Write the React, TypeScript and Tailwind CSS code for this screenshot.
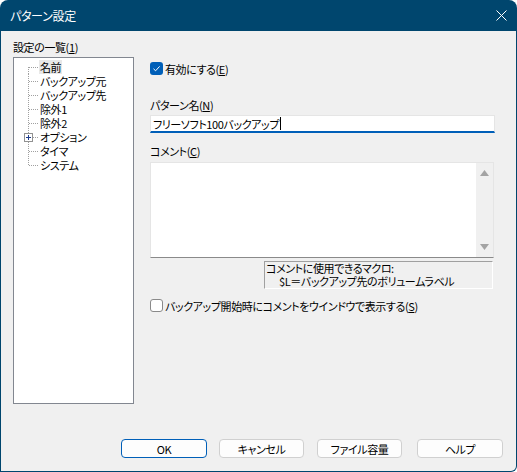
const items = ['名前', 'バックアップ元', 'バックアップ先', '除外1', '除外2', 'オプション', 'タイマ', 'システム'];

function TreeLines({ first, last, plus }: { first: boolean; last: boolean; plus: boolean }) {
  return (
    <svg width="24" height="14" className="shrink-0" shapeRendering="crispEdges">
      <line x1="14.5" y1={first ? 7 : 0} x2="14.5" y2={last ? 8 : 14} stroke="#a0a0a0" strokeDasharray="1 1" />
      <line x1="15" y1="7.5" x2="24" y2="7.5" stroke="#a0a0a0" strokeDasharray="1 1" />
      {plus && (
        <g>
          <rect x="10.5" y="3.5" width="8" height="8" fill="#fff" stroke="#919191" />
          <line x1="12" y1="7.5" x2="17" y2="7.5" stroke="#1e3c8c" />
          <line x1="14.5" y1="5" x2="14.5" y2="10" stroke="#1e3c8c" />
        </g>
      )}
    </svg>
  );
}

function Button({ label, primary, className }: { label: string; primary?: boolean; className?: string }) {
  return (
    <div
      className={`flex h-[19px] items-center justify-center rounded-[4px] border bg-[#fdfdfd] text-black ${
        primary ? 'border-[#005fb8]' : 'border-[#d0d0d0]'
      } ${className ?? ''}`}
    >
      {label}
    </div>
  );
}

export default function App() {
  return (
    <div className="h-[472px] w-[517px] bg-white font-['Noto_Sans_CJK_JP',sans-serif] text-[11px] leading-[14px] tracking-[-0.4px] text-black [font-feature-settings:'palt']">
      <div className="flex h-full flex-col rounded-t-[8px] rounded-br-[6px] bg-[#00466e] px-px pb-px">
        {/* title bar */}
        <div className="flex h-[31px] shrink-0 items-center justify-between pl-[9px] pr-[9px] text-white">
          <span className="text-[12px] tracking-[-0.3px]">パターン設定</span>
          <svg width="11" height="11" viewBox="0 0 11 11">
            <path d="M0.5 0.5 L10.5 10.5 M10.5 0.5 L0.5 10.5" stroke="#fff" strokeWidth="1" fill="none" />
          </svg>
        </div>

        {/* body */}
        <div className="flex flex-1 flex-col rounded-br-[5px] bg-[#f0f0f0]">
          <div className="flex flex-1">
            {/* left column */}
            <div className="ml-[12px] flex w-[121px] flex-col pt-[9px]">
              <div className="h-[14px]">
                設定の一覧(<span className="underline">1</span>)
              </div>
              <div className="mt-[3px] h-[347px] border border-[#828790] bg-white pt-[2px]">
                {items.map((it, i) => (
                  <div key={it} className="flex h-[14px] items-center">
                    <TreeLines first={i === 0} last={i === items.length - 1} plus={it === 'オプション'} />
                    <span className={`ml-px whitespace-nowrap px-px ${i === 0 ? 'bg-[#e8e8e8]' : ''}`}>{it}</span>
                  </div>
                ))}
              </div>
            </div>

            {/* right column */}
            <div className="ml-[16px] flex w-[345px] flex-col pt-[30px]">
              <div className="flex h-[15px] items-center">
                <div className="flex h-[13px] w-[13px] items-center justify-center rounded-[3px] bg-[#005fb8]">
                  <svg width="9" height="9" viewBox="0 0 9 9">
                    <path d="M1.5 4.8 L3.6 6.8 L7.6 2.4" fill="none" stroke="#fff" strokeWidth="1" />
                  </svg>
                </div>
                <span className="ml-[2px]">
                  有効にする(<span className="underline">E</span>)
                </span>
              </div>

              <div className="mt-[22px] h-[14px]">
                パターン名(<span className="underline">N</span>)
              </div>
              <div className="mt-[3px] flex h-[18px] items-center border border-b-2 border-[#e5e5e5] border-b-[#005fb8] bg-white pl-[2px]">
                <span>フリーソフト100バックアップ</span>
                <span className="ml-px inline-block h-[13px] w-px bg-black" />
              </div>

              <div className="mt-[11px] h-[14px]">
                コメント(<span className="underline">C</span>)
              </div>
              <div className="mt-[4px] flex h-[96px] w-[344px] border border-[#e5e5e5] border-b-[#8a8a8a] bg-white">
                <div className="flex-1" />
                <div className="flex w-[17px] flex-col items-center justify-between bg-[#f0f0f0] py-[7px]">
                  <svg width="9" height="6" viewBox="0 0 9 6">
                    <path d="M4.5 0 L9 6 L0 6 Z" fill="#a3a3a3" />
                  </svg>
                  <svg width="9" height="6" viewBox="0 0 9 6">
                    <path d="M0 0 L9 0 L4.5 6 Z" fill="#a3a3a3" />
                  </svg>
                </div>
              </div>

              <div className="ml-[114px] mt-[3px] h-[28px] w-[229px] border border-[#a0a0a0] border-b-white border-r-white pl-px leading-[13px]">
                <div>コメントに使用できるマクロ:</div>
                <div className="pl-[13px]">$L＝バックアップ先のボリュームラベル</div>
              </div>

              <div className="mt-[9px] flex h-[15px] items-center">
                <div className="h-[13px] w-[13px] rounded-[3px] border border-[#8a8a8a] bg-white" />
                <span className="ml-[2px] whitespace-nowrap">
                  バックアップ開始時にコメントをウインドウで表示する(<span className="underline">S</span>)
                </span>
              </div>
            </div>
          </div>

          {/* buttons */}
          <div className="flex pb-[13px] pl-[120px]">
            <Button label="OK" primary className="w-[86px]" />
            <Button label="キャンセル" className="ml-[12px] w-[85px]" />
            <Button label="ファイル容量" className="ml-[13px] w-[85px]" />
            <Button label="ヘルプ" className="ml-[15px] w-[86px]" />
          </div>
        </div>
      </div>
    </div>
  );
}
